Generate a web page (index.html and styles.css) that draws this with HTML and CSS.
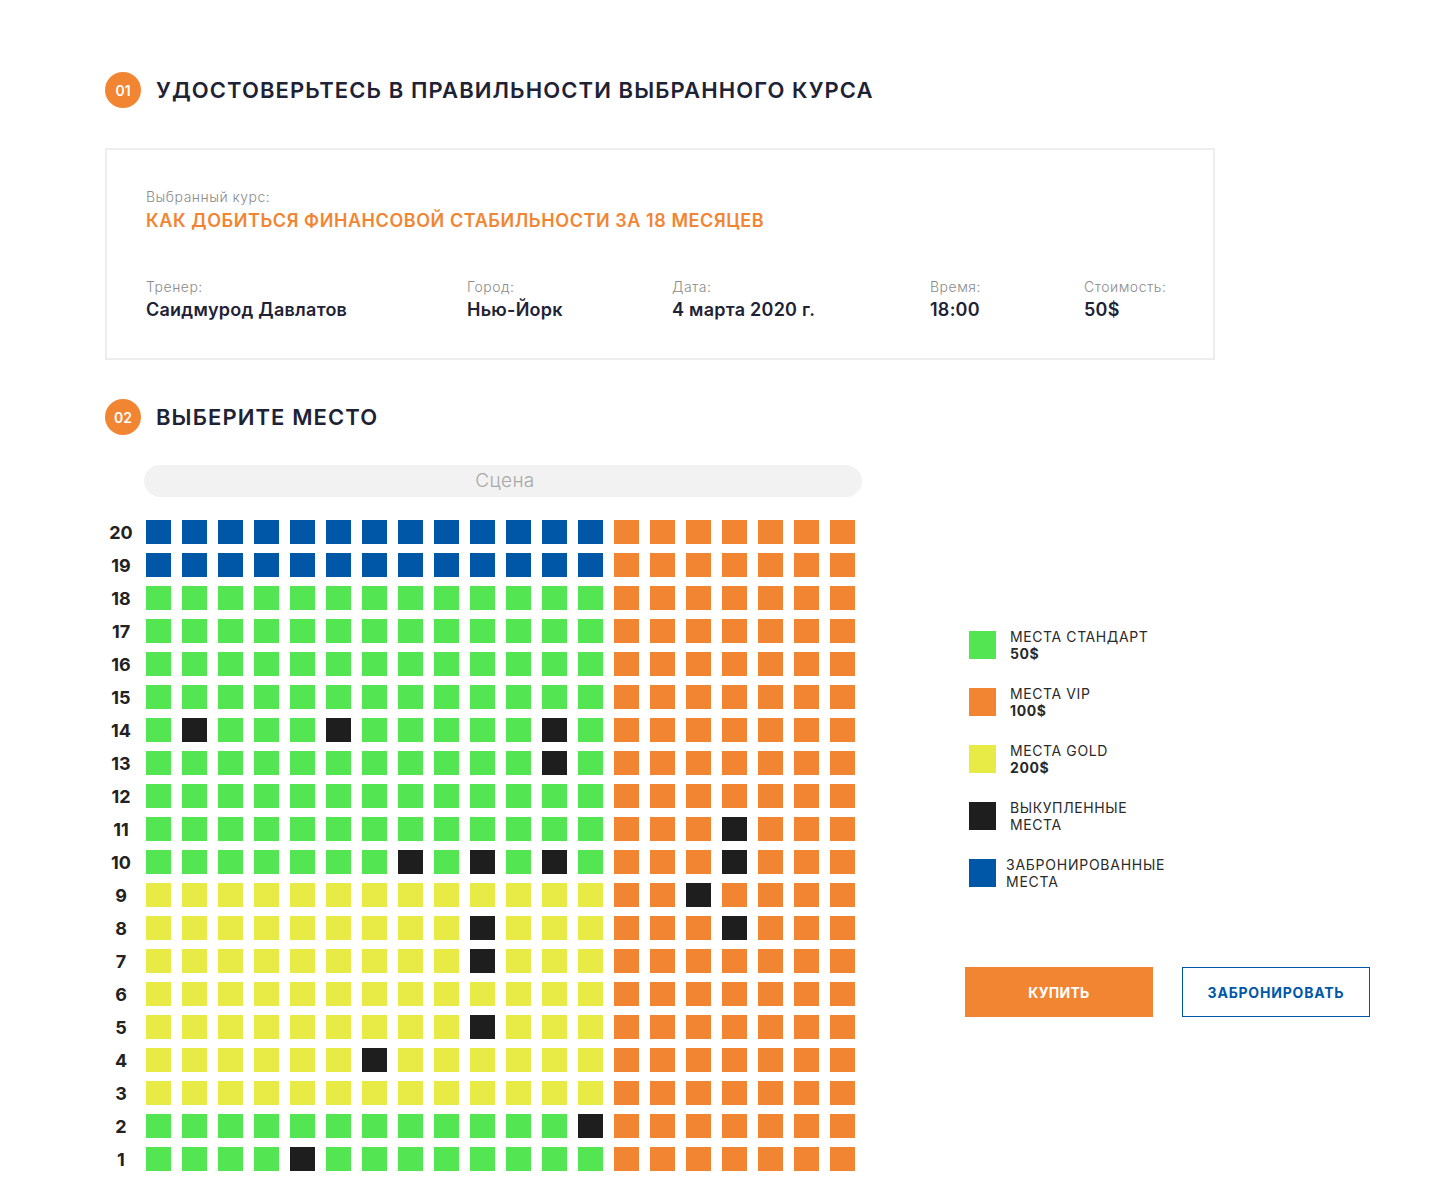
FILE: index.html
```html
<!DOCTYPE html>
<html lang="ru">
<head>
<meta charset="utf-8">
<title>Выбор места</title>
<link rel="stylesheet" href="styles.css">
</head>
<body>
<main class="page">
  <h2 class="step"><span class="step-num">01</span><span class="step-title">УДОСТОВЕРЬТЕСЬ В ПРАВИЛЬНОСТИ ВЫБРАННОГО КУРСА</span></h2>

  <section class="card">
    <div class="label">Выбранный курс:</div>
    <div class="course">КАК ДОБИТЬСЯ ФИНАНСОВОЙ СТАБИЛЬНОСТИ ЗА 18 МЕСЯЦЕВ</div>
    <div class="info">
      <div class="info-col c1"><div class="label">Тренер:</div><div class="value">Саидмурод Давлатов</div></div>
      <div class="info-col c2"><div class="label">Город:</div><div class="value">Нью-Йорк</div></div>
      <div class="info-col c3"><div class="label">Дата:</div><div class="value">4 марта 2020 г.</div></div>
      <div class="info-col c4"><div class="label">Время:</div><div class="value">18:00</div></div>
      <div class="info-col c5"><div class="label">Стоимость:</div><div class="value">50$</div></div>
    </div>
  </section>

  <h2 class="step step-2"><span class="step-num">02</span><span class="step-title">ВЫБЕРИТЕ МЕСТО</span></h2>

  <section class="hall">
    <div class="hall-left">
      <div class="stage">Сцена</div>
      <div class="rows">
        <div class="row"><span class="rn">20</span><i class="b"></i><i class="b"></i><i class="b"></i><i class="b"></i><i class="b"></i><i class="b"></i><i class="b"></i><i class="b"></i><i class="b"></i><i class="b"></i><i class="b"></i><i class="b"></i><i class="b"></i><i class="o"></i><i class="o"></i><i class="o"></i><i class="o"></i><i class="o"></i><i class="o"></i><i class="o"></i></div>
        <div class="row"><span class="rn">19</span><i class="b"></i><i class="b"></i><i class="b"></i><i class="b"></i><i class="b"></i><i class="b"></i><i class="b"></i><i class="b"></i><i class="b"></i><i class="b"></i><i class="b"></i><i class="b"></i><i class="b"></i><i class="o"></i><i class="o"></i><i class="o"></i><i class="o"></i><i class="o"></i><i class="o"></i><i class="o"></i></div>
        <div class="row"><span class="rn">18</span><i class="g"></i><i class="g"></i><i class="g"></i><i class="g"></i><i class="g"></i><i class="g"></i><i class="g"></i><i class="g"></i><i class="g"></i><i class="g"></i><i class="g"></i><i class="g"></i><i class="g"></i><i class="o"></i><i class="o"></i><i class="o"></i><i class="o"></i><i class="o"></i><i class="o"></i><i class="o"></i></div>
        <div class="row"><span class="rn">17</span><i class="g"></i><i class="g"></i><i class="g"></i><i class="g"></i><i class="g"></i><i class="g"></i><i class="g"></i><i class="g"></i><i class="g"></i><i class="g"></i><i class="g"></i><i class="g"></i><i class="g"></i><i class="o"></i><i class="o"></i><i class="o"></i><i class="o"></i><i class="o"></i><i class="o"></i><i class="o"></i></div>
        <div class="row"><span class="rn">16</span><i class="g"></i><i class="g"></i><i class="g"></i><i class="g"></i><i class="g"></i><i class="g"></i><i class="g"></i><i class="g"></i><i class="g"></i><i class="g"></i><i class="g"></i><i class="g"></i><i class="g"></i><i class="o"></i><i class="o"></i><i class="o"></i><i class="o"></i><i class="o"></i><i class="o"></i><i class="o"></i></div>
        <div class="row"><span class="rn">15</span><i class="g"></i><i class="g"></i><i class="g"></i><i class="g"></i><i class="g"></i><i class="g"></i><i class="g"></i><i class="g"></i><i class="g"></i><i class="g"></i><i class="g"></i><i class="g"></i><i class="g"></i><i class="o"></i><i class="o"></i><i class="o"></i><i class="o"></i><i class="o"></i><i class="o"></i><i class="o"></i></div>
        <div class="row"><span class="rn">14</span><i class="g"></i><i class="k"></i><i class="g"></i><i class="g"></i><i class="g"></i><i class="k"></i><i class="g"></i><i class="g"></i><i class="g"></i><i class="g"></i><i class="g"></i><i class="k"></i><i class="g"></i><i class="o"></i><i class="o"></i><i class="o"></i><i class="o"></i><i class="o"></i><i class="o"></i><i class="o"></i></div>
        <div class="row"><span class="rn">13</span><i class="g"></i><i class="g"></i><i class="g"></i><i class="g"></i><i class="g"></i><i class="g"></i><i class="g"></i><i class="g"></i><i class="g"></i><i class="g"></i><i class="g"></i><i class="k"></i><i class="g"></i><i class="o"></i><i class="o"></i><i class="o"></i><i class="o"></i><i class="o"></i><i class="o"></i><i class="o"></i></div>
        <div class="row"><span class="rn">12</span><i class="g"></i><i class="g"></i><i class="g"></i><i class="g"></i><i class="g"></i><i class="g"></i><i class="g"></i><i class="g"></i><i class="g"></i><i class="g"></i><i class="g"></i><i class="g"></i><i class="g"></i><i class="o"></i><i class="o"></i><i class="o"></i><i class="o"></i><i class="o"></i><i class="o"></i><i class="o"></i></div>
        <div class="row"><span class="rn">11</span><i class="g"></i><i class="g"></i><i class="g"></i><i class="g"></i><i class="g"></i><i class="g"></i><i class="g"></i><i class="g"></i><i class="g"></i><i class="g"></i><i class="g"></i><i class="g"></i><i class="g"></i><i class="o"></i><i class="o"></i><i class="o"></i><i class="k"></i><i class="o"></i><i class="o"></i><i class="o"></i></div>
        <div class="row"><span class="rn">10</span><i class="g"></i><i class="g"></i><i class="g"></i><i class="g"></i><i class="g"></i><i class="g"></i><i class="g"></i><i class="k"></i><i class="g"></i><i class="k"></i><i class="g"></i><i class="k"></i><i class="g"></i><i class="o"></i><i class="o"></i><i class="o"></i><i class="k"></i><i class="o"></i><i class="o"></i><i class="o"></i></div>
        <div class="row"><span class="rn">9</span><i class="y"></i><i class="y"></i><i class="y"></i><i class="y"></i><i class="y"></i><i class="y"></i><i class="y"></i><i class="y"></i><i class="y"></i><i class="y"></i><i class="y"></i><i class="y"></i><i class="y"></i><i class="o"></i><i class="o"></i><i class="k"></i><i class="o"></i><i class="o"></i><i class="o"></i><i class="o"></i></div>
        <div class="row"><span class="rn">8</span><i class="y"></i><i class="y"></i><i class="y"></i><i class="y"></i><i class="y"></i><i class="y"></i><i class="y"></i><i class="y"></i><i class="y"></i><i class="k"></i><i class="y"></i><i class="y"></i><i class="y"></i><i class="o"></i><i class="o"></i><i class="o"></i><i class="k"></i><i class="o"></i><i class="o"></i><i class="o"></i></div>
        <div class="row"><span class="rn">7</span><i class="y"></i><i class="y"></i><i class="y"></i><i class="y"></i><i class="y"></i><i class="y"></i><i class="y"></i><i class="y"></i><i class="y"></i><i class="k"></i><i class="y"></i><i class="y"></i><i class="y"></i><i class="o"></i><i class="o"></i><i class="o"></i><i class="o"></i><i class="o"></i><i class="o"></i><i class="o"></i></div>
        <div class="row"><span class="rn">6</span><i class="y"></i><i class="y"></i><i class="y"></i><i class="y"></i><i class="y"></i><i class="y"></i><i class="y"></i><i class="y"></i><i class="y"></i><i class="y"></i><i class="y"></i><i class="y"></i><i class="y"></i><i class="o"></i><i class="o"></i><i class="o"></i><i class="o"></i><i class="o"></i><i class="o"></i><i class="o"></i></div>
        <div class="row"><span class="rn">5</span><i class="y"></i><i class="y"></i><i class="y"></i><i class="y"></i><i class="y"></i><i class="y"></i><i class="y"></i><i class="y"></i><i class="y"></i><i class="k"></i><i class="y"></i><i class="y"></i><i class="y"></i><i class="o"></i><i class="o"></i><i class="o"></i><i class="o"></i><i class="o"></i><i class="o"></i><i class="o"></i></div>
        <div class="row"><span class="rn">4</span><i class="y"></i><i class="y"></i><i class="y"></i><i class="y"></i><i class="y"></i><i class="y"></i><i class="k"></i><i class="y"></i><i class="y"></i><i class="y"></i><i class="y"></i><i class="y"></i><i class="y"></i><i class="o"></i><i class="o"></i><i class="o"></i><i class="o"></i><i class="o"></i><i class="o"></i><i class="o"></i></div>
        <div class="row"><span class="rn">3</span><i class="y"></i><i class="y"></i><i class="y"></i><i class="y"></i><i class="y"></i><i class="y"></i><i class="y"></i><i class="y"></i><i class="y"></i><i class="y"></i><i class="y"></i><i class="y"></i><i class="y"></i><i class="o"></i><i class="o"></i><i class="o"></i><i class="o"></i><i class="o"></i><i class="o"></i><i class="o"></i></div>
        <div class="row"><span class="rn">2</span><i class="g"></i><i class="g"></i><i class="g"></i><i class="g"></i><i class="g"></i><i class="g"></i><i class="g"></i><i class="g"></i><i class="g"></i><i class="g"></i><i class="g"></i><i class="g"></i><i class="k"></i><i class="o"></i><i class="o"></i><i class="o"></i><i class="o"></i><i class="o"></i><i class="o"></i><i class="o"></i></div>
        <div class="row"><span class="rn">1</span><i class="g"></i><i class="g"></i><i class="g"></i><i class="g"></i><i class="k"></i><i class="g"></i><i class="g"></i><i class="g"></i><i class="g"></i><i class="g"></i><i class="g"></i><i class="g"></i><i class="g"></i><i class="o"></i><i class="o"></i><i class="o"></i><i class="o"></i><i class="o"></i><i class="o"></i><i class="o"></i></div>
      </div>
    </div>

    <aside class="hall-right">
      <ul class="legend">
        <li class="legend-item"><i class="sw g"></i><span class="lt">МЕСТА СТАНДАРТ<br><b>50$</b></span></li>
        <li class="legend-item"><i class="sw o"></i><span class="lt">МЕСТА VIP<br><b>100$</b></span></li>
        <li class="legend-item"><i class="sw y"></i><span class="lt">МЕСТА GOLD<br><b>200$</b></span></li>
        <li class="legend-item"><i class="sw k"></i><span class="lt">ВЫКУПЛЕННЫЕ<br>МЕСТА</span></li>
        <li class="legend-item"><i class="sw b"></i><span class="lt lt-tight">ЗАБРОНИРОВАННЫЕ<br>МЕСТА</span></li>
      </ul>
      <div class="actions">
        <button class="btn btn-buy">КУПИТЬ</button>
        <button class="btn btn-book">ЗАБРОНИРОВАТЬ</button>
      </div>
    </aside>
  </section>
</main>
</body>
</html>
```

FILE: styles.css
```css
* { box-sizing: border-box; }
html, body { margin: 0; padding: 0; background: #fff; }
body {
  font-family: Inter, "Open Sans", "Noto Sans", sans-serif;
  color: #1e2235;
}
.page {
  padding: 72px 0 0 105px;
  width: 1440px;
}
.step {
  display: flex;
  align-items: center;
  gap: 15px;
  margin: 0;
  height: 36px;
}
.step-num {
  width: 36px;
  height: 36px;
  border-radius: 50%;
  background: #f28532;
  color: #fff;
  font-size: 14px;
  font-weight: 600;
  display: flex;
  align-items: center;
  justify-content: center;
}
.step-title {
  font-size: 22px;
  font-weight: 600;
  letter-spacing: 1.1px;
  color: #1e2235;
}
.step-2 { margin-top: 39px; }

.card {
  margin-top: 40px;
  width: 1110px;
  height: 212px;
  border: 2px solid #ededed;
  padding: 38px 39px 0;
}
.label {
  font-size: 14px;
  line-height: 18px;
  font-weight: 300;
  letter-spacing: 0.5px;
  color: #8b8b8b;
}
.course {
  margin-top: 3px;
  font-size: 18px;
  line-height: 24px;
  font-weight: 600;
  letter-spacing: 0.57px;
  color: #f28532;
}
.info {
  display: flex;
  margin-top: 45px;
}
.info .value {
  margin-top: 2px;
  font-size: 18px;
  line-height: 24px;
  font-weight: 600;
  letter-spacing: 0.25px;
  color: #1e2235;
}
.c1 { width: 321px; }
.c2 { width: 205px; }
.c3 { width: 258px; }
.c4 { width: 154px; }

.hall {
  display: flex;
  margin-top: 30px;
}
.hall-left { width: 860px; }
.stage {
  margin-left: 39px;
  width: 718px;
  height: 32px;
  border-radius: 16px;
  background: #f2f2f2;
  color: #a8a8a8;
  font-size: 19px;
  line-height: 32px;
  text-align: center;
  font-weight: 300;
  letter-spacing: 0.4px;
  padding-left: 4px;
}
.rows {
  margin-top: 23px;
  display: flex;
  flex-direction: column;
  gap: 9px;
}
.row {
  display: flex;
  align-items: center;
  gap: 11px;
  height: 24px;
}
.row .rn {
  width: 32px;
  margin-right: -2px;
  text-align: center;
  font-size: 18px;
  font-weight: 700;
  color: #222;
}
.row i {
  display: block;
  width: 25px;
  height: 24px;
}
.g { background: #53e552; }
.o { background: #f28532; }
.y { background: #e8eb45; }
.k { background: #1e1e1e; }
.b { background: #0057a8; }

.hall-right {
  width: 420px;
}
.legend {
  list-style: none;
  margin: 163px 0 0 4px;
  padding: 0;
  display: flex;
  flex-direction: column;
  gap: 23px;
}
.legend-item {
  display: flex;
  align-items: flex-start;
  gap: 14px;
  height: 34px;
}
.sw {
  display: block;
  width: 27px;
  height: 28px;
  margin-top: 3px;
  flex: none;
}
.lt {
  font-size: 14px;
  line-height: 17px;
  color: #2a2a2a;
  font-weight: 400;
  letter-spacing: 0.6px;
}
.lt b { font-weight: 700; }
.lt-tight { margin-left: -4px; letter-spacing: 0.75px; }

.actions {
  display: flex;
  gap: 29px;
  margin-top: 77px;
}
.btn {
  width: 188px;
  height: 50px;
  font-family: Inter, "Open Sans", sans-serif;
  font-size: 14px;
  font-weight: 700;
  letter-spacing: 0.3px;
  border-radius: 0;
  cursor: pointer;
}
.btn-buy {
  background: #f28532;
  border: none;
  color: #fff;
}
.btn-book {
  background: #fff;
  border: 1px solid #0057a8;
  color: #0057a8;
  letter-spacing: 0.8px;
}
```
